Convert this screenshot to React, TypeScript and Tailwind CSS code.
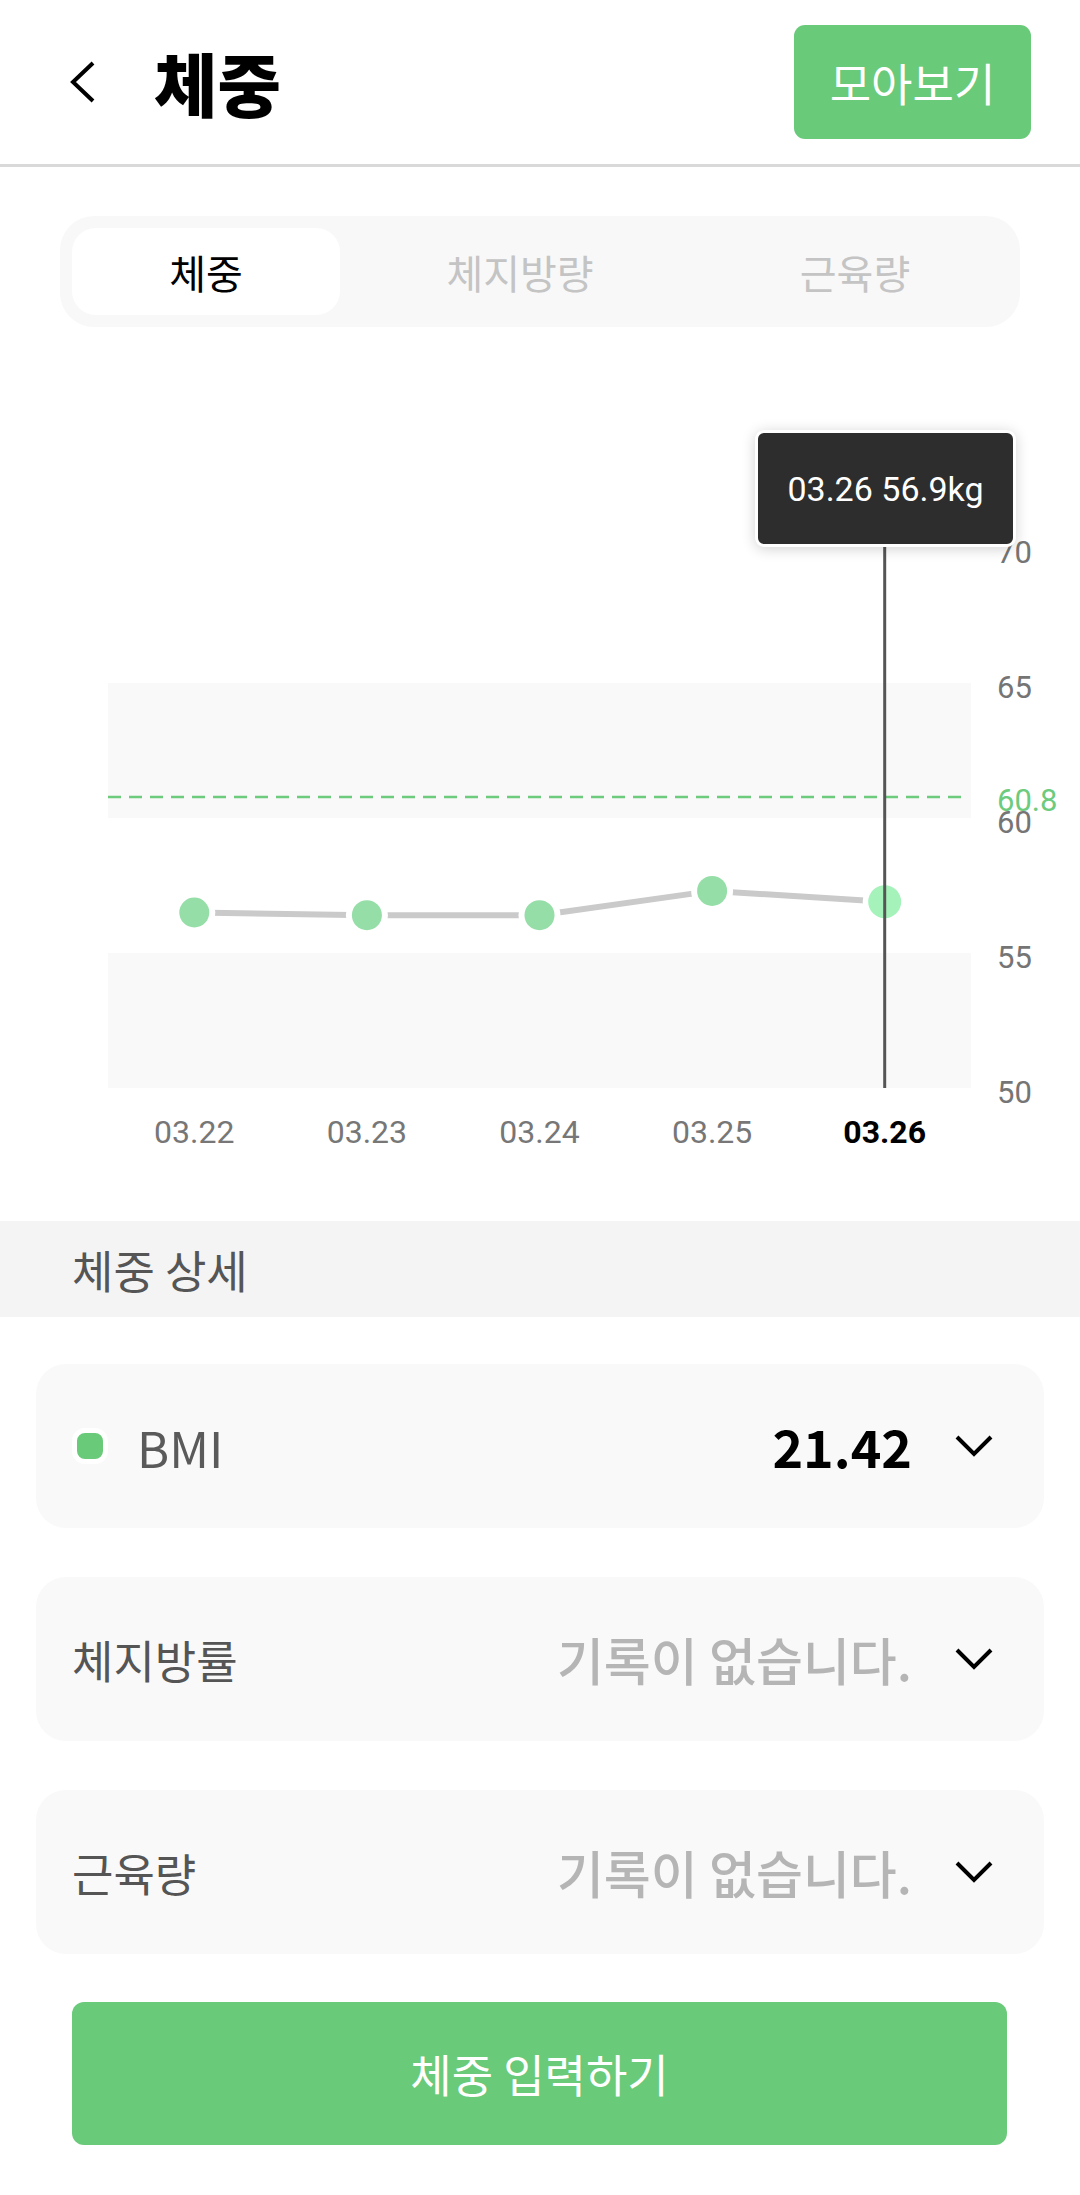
import React from "react";

const points = [
  { label: "03.22", value: 56.5 },
  { label: "03.23", value: 56.4 },
  { label: "03.24", value: 56.4 },
  { label: "03.25", value: 57.3 },
  { label: "03.26", value: 56.9 },
];

// chart area is 894px tall, plot from x 108 to 971, value 50 sits at y 761
const colW = (971 - 108) / 5;
const xOf = (i: number) => 108 + colW * (i + 0.5);
const yOf = (v: number) => 761 - (v - 50) * 27;

const ticks = [70, 65, 60, 55, 50];

function Chevron({ className = "" }: { className?: string }) {
  return (
    <svg width="40" height="24" viewBox="0 0 40 24" className={className}>
      <polyline points="3,3 20,20 37,3" fill="none" stroke="#000" strokeWidth="4" />
    </svg>
  );
}

function DetailCard({ children }: { children: React.ReactNode }) {
  return (
    <div className="mx-[36px] flex h-[164px] items-center rounded-[30px] bg-[#f9f9f9] pl-[36px] pr-[50px]">
      {children}
    </div>
  );
}

function WeightChart() {
  const last = points.length - 1;
  const selX = xOf(last);
  return (
    <div className="relative h-[894px]">
      <svg width="1080" height="894" viewBox="0 0 1080 894" className="block">
        <rect x="108" y="356" width="863" height="135" fill="#f9f9f9" />
        <rect x="108" y="626" width="863" height="135" fill="#f9f9f9" />
        <line x1="108" y1="470" x2="968" y2="470" stroke="#6ccb7d" strokeWidth="2.5" strokeDasharray="13 8" />
        {ticks.map((t) => (
          <text key={t} x="997" y={yOf(t) + 4} dominantBaseline="central" fontSize="31" fill="#757575" fontFamily="Roboto, sans-serif">
            {t}
          </text>
        ))}
        <text x="997" y="473" dominantBaseline="central" fontSize="31" fill="#6ccb7d" fontFamily="Roboto, sans-serif">
          60.8
        </text>
        <polyline
          points={points.map((p, i) => `${xOf(i)},${yOf(p.value)}`).join(" ")}
          fill="none"
          stroke="#cacaca"
          strokeWidth="6"
        />
        {points.map((p, i) => (
          <g key={p.label}>
            <circle cx={xOf(i)} cy={yOf(p.value)} r={i === last ? 22 : 21} fill="#fff" />
            <circle cx={xOf(i)} cy={yOf(p.value)} r={i === last ? 16.5 : 15} fill={i === last ? "#a5f2bb" : "#95dea7"} />
          </g>
        ))}
        <line x1={selX} y1="220" x2={selX} y2="761" stroke="#555" strokeWidth="3" />
        {points.map((p, i) => (
          <text
            key={p.label}
            x={xOf(i)}
            y="805"
            textAnchor="middle"
            dominantBaseline="central"
            fontSize="32"
            fontWeight={i === last ? 700 : 400}
            fill={i === last ? "#000" : "#777"}
            fontFamily="Roboto, sans-serif"
          >
            {p.label}
          </text>
        ))}
      </svg>
      <div className="absolute left-[755px] top-[103px] flex h-[117px] w-[261px] items-center justify-center rounded-[9px] border-[3px] border-white bg-[#2d2d2d] shadow-[0_2px_14px_rgba(0,0,0,0.18)]">
        <span className="font-['Roboto',sans-serif] text-[34px] leading-none text-white">03.26 56.9kg</span>
      </div>
    </div>
  );
}

export default function App() {
  return (
    <div className="min-h-[2195px] w-[1080px] bg-white font-['Noto_Sans_CJK_KR','Noto_Sans',sans-serif]">
      <header className="flex h-[167px] items-center border-b-[3px] border-[#d9d9d9] pl-[70px] pr-[49px]">
        <svg width="26" height="44" viewBox="0 0 26 44">
          <polyline points="23,3 3,22 23,41" fill="none" stroke="#000" strokeWidth="4" />
        </svg>
        <h1 className="ml-[58px] text-[69px] font-black leading-none text-black">체중</h1>
        <button className="ml-auto flex h-[114px] w-[237px] items-center justify-center rounded-[11px] bg-[#69ca7a] text-[45px] leading-none text-white">
          모아보기
        </button>
      </header>

      <div className="mx-[60px] mt-[49px] flex h-[111px] items-center rounded-[34px] bg-[#f8f8f8] px-[12px]">
        <div className="flex h-[87px] w-[268px] items-center justify-center rounded-[24px] bg-white text-[40px] leading-none text-black">
          체중
        </div>
        <div className="ml-[46px] flex h-[87px] w-[268px] items-center justify-center text-[40px] leading-none text-[#c4c4c4]">
          체지방량
        </div>
        <div className="ml-[67px] flex h-[87px] w-[268px] items-center justify-center text-[40px] leading-none text-[#c4c4c4]">
          근육량
        </div>
      </div>

      <WeightChart />

      <div className="flex h-[96px] items-center bg-[#f4f4f4] px-[72px]">
        <h2 className="text-[45px] leading-none text-[#555]">체중 상세</h2>
      </div>

      <div className="mt-[47px] flex flex-col gap-[49px]">
        <DetailCard>
          <div className="h-[36px] w-[36px] rounded-[13px] border-[5px] border-white bg-[#69ca7a]" />
          <span className="ml-[29px] text-[49px] leading-none text-[#5a5a5a]">BMI</span>
          <span className="ml-auto text-[52px] font-bold leading-none text-black">21.42</span>
          <Chevron className="ml-[42px]" />
        </DetailCard>
        <DetailCard>
          <span className="text-[45px] leading-none text-[#555]">체지방률</span>
          <span className="ml-auto text-[51px] font-medium leading-none text-[#b5b5b5]">기록이 없습니다.</span>
          <Chevron className="ml-[42px]" />
        </DetailCard>
        <DetailCard>
          <span className="text-[45px] leading-none text-[#555]">근육량</span>
          <span className="ml-auto text-[51px] font-medium leading-none text-[#b5b5b5]">기록이 없습니다.</span>
          <Chevron className="ml-[42px]" />
        </DetailCard>
      </div>

      <div className="mt-[48px] px-[72px] pr-[73px]">
        <button className="flex h-[143px] w-full items-center justify-center rounded-[12px] bg-[#69ca7a] text-[45px] leading-none text-white">
          체중 입력하기
        </button>
      </div>
    </div>
  );
}
